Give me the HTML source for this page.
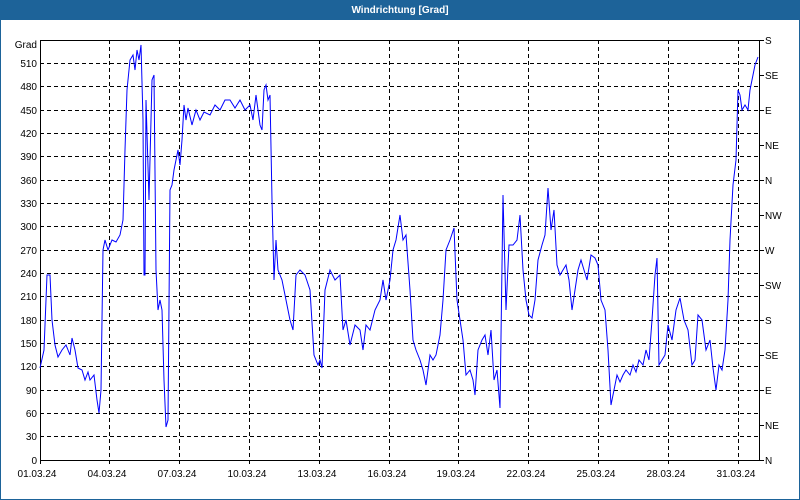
<!DOCTYPE html>
<html><head><meta charset="utf-8"><style>
html,body{margin:0;padding:0;width:800px;height:500px;overflow:hidden;background:#fff;font-family:"Liberation Sans",Tahoma,sans-serif}
</style></head><body>
<svg width="800" height="500" xmlns="http://www.w3.org/2000/svg" font-family="Liberation Sans, sans-serif" font-size="10">
<rect x="0" y="0" width="800" height="500" fill="#fff"/>
<rect x="0.5" y="0.5" width="799" height="499" fill="none" stroke="#1d6399"/>
<rect x="0" y="0" width="800" height="20" fill="#1d6399"/>
<text x="400" y="13" fill="#fff" font-weight="bold" text-anchor="middle" font-size="10">Windrichtung [Grad]</text>
<g stroke="#000" stroke-dasharray="4,3" stroke-width="1">
<line x1="40" x2="760" y1="63.5" y2="63.5"/><line x1="40" x2="760" y1="86.5" y2="86.5"/><line x1="40" x2="760" y1="110.5" y2="110.5"/><line x1="40" x2="760" y1="133.5" y2="133.5"/><line x1="40" x2="760" y1="156.5" y2="156.5"/><line x1="40" x2="760" y1="180.5" y2="180.5"/><line x1="40" x2="760" y1="203.5" y2="203.5"/><line x1="40" x2="760" y1="226.5" y2="226.5"/><line x1="40" x2="760" y1="250.5" y2="250.5"/><line x1="40" x2="760" y1="273.5" y2="273.5"/><line x1="40" x2="760" y1="296.5" y2="296.5"/><line x1="40" x2="760" y1="320.5" y2="320.5"/><line x1="40" x2="760" y1="343.5" y2="343.5"/><line x1="40" x2="760" y1="366.5" y2="366.5"/><line x1="40" x2="760" y1="390.5" y2="390.5"/><line x1="40" x2="760" y1="413.5" y2="413.5"/><line x1="40" x2="760" y1="436.5" y2="436.5"/>
<line y1="40" y2="460" x1="109.5" x2="109.5"/><line y1="40" y2="460" x1="179.5" x2="179.5"/><line y1="40" y2="460" x1="249.5" x2="249.5"/><line y1="40" y2="460" x1="319.5" x2="319.5"/><line y1="40" y2="460" x1="389.5" x2="389.5"/><line y1="40" y2="460" x1="458.5" x2="458.5"/><line y1="40" y2="460" x1="528.5" x2="528.5"/><line y1="40" y2="460" x1="598.5" x2="598.5"/><line y1="40" y2="460" x1="668.5" x2="668.5"/><line y1="40" y2="460" x1="738.5" x2="738.5"/>
</g>
<rect x="40.5" y="40.5" width="719" height="420" fill="none" stroke="#000"/>
<g stroke="#000"><line x1="760" x2="764" y1="40.5" y2="40.5"/><line x1="760" x2="764" y1="75.5" y2="75.5"/><line x1="760" x2="764" y1="110.5" y2="110.5"/><line x1="760" x2="764" y1="145.5" y2="145.5"/><line x1="760" x2="764" y1="180.5" y2="180.5"/><line x1="760" x2="764" y1="215.5" y2="215.5"/><line x1="760" x2="764" y1="250.5" y2="250.5"/><line x1="760" x2="764" y1="285.5" y2="285.5"/><line x1="760" x2="764" y1="320.5" y2="320.5"/><line x1="760" x2="764" y1="355.5" y2="355.5"/><line x1="760" x2="764" y1="390.5" y2="390.5"/><line x1="760" x2="764" y1="425.5" y2="425.5"/><line x1="760" x2="764" y1="460.5" y2="460.5"/>
<line y1="460" y2="464" x1="40.5" x2="40.5"/><line y1="460" y2="464" x1="109.5" x2="109.5"/><line y1="460" y2="464" x1="179.5" x2="179.5"/><line y1="460" y2="464" x1="249.5" x2="249.5"/><line y1="460" y2="464" x1="319.5" x2="319.5"/><line y1="460" y2="464" x1="389.5" x2="389.5"/><line y1="460" y2="464" x1="458.5" x2="458.5"/><line y1="460" y2="464" x1="528.5" x2="528.5"/><line y1="460" y2="464" x1="598.5" x2="598.5"/><line y1="460" y2="464" x1="668.5" x2="668.5"/><line y1="460" y2="464" x1="738.5" x2="738.5"/></g>
<g text-anchor="end" fill="#000">
<text x="37" y="48">Grad</text><text x="37" y="67">510</text><text x="37" y="90">480</text><text x="37" y="114">450</text><text x="37" y="137">420</text><text x="37" y="160">390</text><text x="37" y="184">360</text><text x="37" y="207">330</text><text x="37" y="230">300</text><text x="37" y="254">270</text><text x="37" y="277">240</text><text x="37" y="300">210</text><text x="37" y="324">180</text><text x="37" y="347">150</text><text x="37" y="370">120</text><text x="37" y="394">90</text><text x="37" y="417">60</text><text x="37" y="440">30</text><text x="37" y="464">0</text>
</g>
<g fill="#000">
<text x="765" y="44">S</text><text x="765" y="79">SE</text><text x="765" y="114">E</text><text x="765" y="149">NE</text><text x="765" y="184">N</text><text x="765" y="219">NW</text><text x="765" y="254">W</text><text x="765" y="289">SW</text><text x="765" y="324">S</text><text x="765" y="359">SE</text><text x="765" y="394">E</text><text x="765" y="429">NE</text><text x="765" y="464">N</text>
</g>
<g text-anchor="middle" fill="#000">
<text x="37" y="477">01.03.24</text><text x="107" y="477">04.03.24</text><text x="177" y="477">07.03.24</text><text x="247" y="477">10.03.24</text><text x="317" y="477">13.03.24</text><text x="387" y="477">16.03.24</text><text x="456" y="477">19.03.24</text><text x="526" y="477">22.03.24</text><text x="596" y="477">25.03.24</text><text x="666" y="477">28.03.24</text><text x="736" y="477">31.03.24</text>
</g>
<polyline fill="none" stroke="#0000ff" stroke-width="1" points="40,368 44,350 47,275 50,275 52,320 55,345 58,357 62,350 66,345 70,355 72,338 75,350 78,368 82,370 85,380 88,372 90,380 94,375 97,400 99,413 101,390 103,250 105,240 108,250 112,240 116,242 120,235 123,220 125,150 127,90 130,60 133,55 135,70 137,50 139,60 141,45 143,120 144,275 145,275 146,100 149,200 152,80 154,75 156,270 158,310 160,300 162,310 164,380 166,427 168,420 170,190 172,185 174,170 176,160 178,150 180,165 182,140 184,105 186,120 188,108 192,125 196,110 200,120 204,112 210,115 215,105 220,110 225,100 230,100 235,108 240,100 245,110 250,105 253,120 256,95 260,125 262,130 264,90 266,85 268,100 270,95 272,200 274,280 276,240 278,270 282,280 286,300 290,320 293,330 296,275 300,270 305,275 310,290 314,355 318,365 320,360 322,368 325,290 330,270 335,280 340,275 343,330 346,320 350,345 355,325 360,330 363,350 366,325 370,330 375,310 380,300 383,280 386,300 390,280 393,250 396,240 400,215 403,240 406,235 410,290 413,340 416,350 420,360 423,370 426,385 430,355 433,360 436,355 440,335 443,300 446,250 450,240 454,228 457,300 460,320 463,340 466,375 470,370 473,380 475,395 478,350 482,340 485,335 488,355 491,330 494,380 497,370 500,408 503,195 506,310 509,245 513,245 517,240 520,215 523,270 526,300 529,315 532,318 535,300 538,260 542,245 545,235 548,188 551,230 554,210 557,265 560,275 563,270 566,265 569,280 572,310 575,290 578,270 581,260 584,270 587,280 591,255 595,258 598,265 601,300 605,310 608,350 611,405 614,390 617,375 620,382 623,375 626,370 630,375 633,365 636,372 639,360 643,365 646,350 649,360 652,320 655,275 657,258 659,365 662,360 665,355 668,325 672,340 676,310 680,298 684,320 688,330 692,365 695,360 698,315 702,320 706,350 710,340 713,368 716,390 719,365 722,370 725,350 728,300 730,240 733,185 736,160 738,90 740,95 742,110 745,105 748,110 750,90 752,80 755,65 758,57"/>
</svg>
</body></html>
